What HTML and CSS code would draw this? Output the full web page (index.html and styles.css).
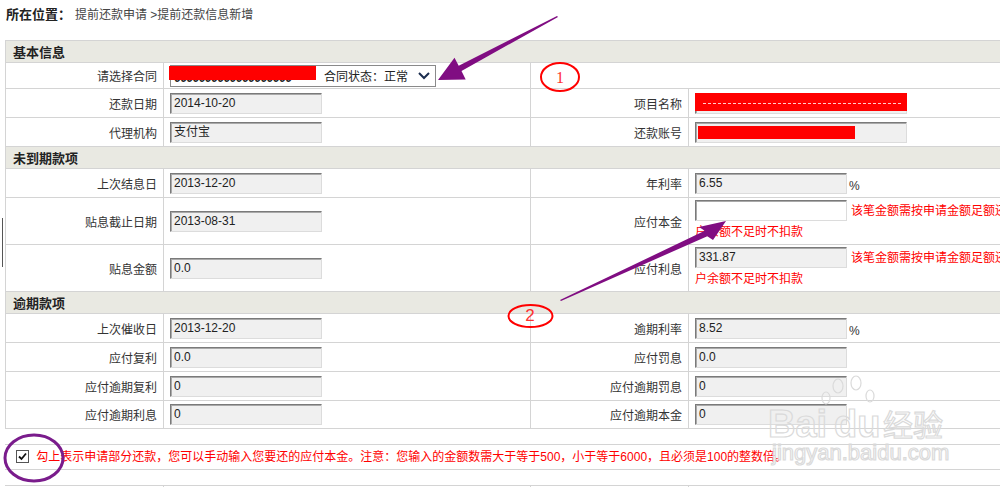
FILE: index.html
```html
<!DOCTYPE html>
<html lang="zh-CN">
<head>
    <meta charset="UTF-8">
    <title>提前还款信息新增</title>
    <link rel="stylesheet" href="styles.css">
</head>
<body>
    <div class="crumb"><b>所在位置：</b><span class="path">提前还款申请 &gt;提前还款信息新增</span></div>

    <div class="wrap">
        <table class="form">
            <colgroup><col class="c1"><col class="c2"><col class="c3"><col class="c4"></colgroup>
            <tr class="head"><td colspan="4">基本信息</td></tr>
            <tr class="h26">
                <td class="lbl">请选择合同</td>
                <td>
                    <div class="select">
                        <span class="num">0000000000000000000</span>
                        <span class="state">合同状态：正常</span>
                        <svg class="chev" width="14" height="10" viewBox="0 0 14 10"><path d="M2 2 L7 7 L12 2" fill="none" stroke="#1b2d4f" stroke-width="2"/></svg>
                        <span class="redact r-select"></span>
                    </div>
                </td>
                <td colspan="2"></td>
            </tr>
            <tr class="h29">
                <td class="lbl">还款日期</td>
                <td><span class="field">2014-10-20</span></td>
                <td class="lbl">项目名称</td>
                <td><span class="field wide"><span class="redact r-name"></span></span></td>
            </tr>
            <tr class="h29">
                <td class="lbl">代理机构</td>
                <td><span class="field">支付宝</span></td>
                <td class="lbl">还款账号</td>
                <td><span class="field wide">0<span class="redact r-acct"></span></span></td>
            </tr>

            <tr class="head"><td colspan="4">未到期款项</td></tr>
            <tr class="h29">
                <td class="lbl">上次结息日</td>
                <td><span class="field">2013-12-20</span></td>
                <td class="lbl">年利率</td>
                <td><span class="field">6.55</span><span class="pct">%</span></td>
            </tr>
            <tr class="h47">
                <td class="lbl">贴息截止日期</td>
                <td><span class="field">2013-08-31</span></td>
                <td class="lbl">应付本金</td>
                <td class="multi"><span class="field edit"></span><span class="warn">该笔金额需按申请金额足额还款，账户余额不足时不扣款</span></td>
            </tr>
            <tr class="h47">
                <td class="lbl">贴息金额</td>
                <td><span class="field">0.0</span></td>
                <td class="lbl">应付利息</td>
                <td class="multi"><span class="field">331.87</span><span class="warn">该笔金额需按申请金额足额还款，账户余额不足时不扣款</span></td>
            </tr>

            <tr class="head"><td colspan="4">逾期款项</td></tr>
            <tr class="h29">
                <td class="lbl">上次催收日</td>
                <td><span class="field">2013-12-20</span></td>
                <td class="lbl">逾期利率</td>
                <td><span class="field">8.52</span><span class="pct">%</span></td>
            </tr>
            <tr class="h29">
                <td class="lbl">应付复利</td>
                <td><span class="field">0.0</span></td>
                <td class="lbl">应付罚息</td>
                <td><span class="field">0.0</span></td>
            </tr>
            <tr class="h29">
                <td class="lbl">应付逾期复利</td>
                <td><span class="field">0</span></td>
                <td class="lbl">应付逾期罚息</td>
                <td><span class="field">0</span></td>
            </tr>
            <tr class="h28">
                <td class="lbl">应付逾期利息</td>
                <td><span class="field">0</span></td>
                <td class="lbl">应付逾期本金</td>
                <td><span class="field">0</span></td>
            </tr>
        </table>

        <div class="note">
            <span class="check"><svg width="11" height="11" viewBox="0 0 11 11"><path d="M2 5.5 L4.5 8 L9 2.5" fill="none" stroke="#111" stroke-width="1.8"/></svg></span>
            勾上表示申请部分还款，您可以手动输入您要还的应付本金。注意：您输入的金额数需大于等于500，小于等于6000，且必须是100的整数倍。
        </div>

        <table class="form tail">
            <colgroup><col class="c1"><col class="c2"><col class="c3"><col class="c4"></colgroup>
            <tr class="h29"><td></td><td></td><td></td><td></td></tr>
        </table>
    </div>

    <svg class="marks" width="1000" height="487" viewBox="0 0 1000 487">
        <line x1="2.5" y1="218" x2="2.5" y2="267" stroke="#555" stroke-width="1"/>

        <g class="wm" fill="none" stroke="#dadada" stroke-width="1.2">
            <text x="768" y="437" font-size="38" font-family="Liberation Sans, sans-serif" font-weight="bold">Bai</text>
            <text x="834" y="437" font-size="38" font-family="Liberation Sans, sans-serif" font-weight="bold">du</text>
            <text x="883" y="436" font-size="30" font-family="Noto Sans CJK SC, sans-serif">经验</text>
            <text x="772" y="460" font-size="22" font-family="Liberation Sans, sans-serif">jingyan.baidu.com</text>
            <ellipse cx="838" cy="386" rx="5" ry="7"/>
            <ellipse cx="856" cy="383" rx="5" ry="7"/>
            <ellipse cx="826" cy="398" rx="4" ry="6"/>
            <ellipse cx="870" cy="396" rx="4" ry="6"/>
        </g>

        <polygon points="558,17 461.5,71 465.7,79.5 438,80 454.5,57.8 458.7,65.8 557,16" fill="#800d82"/>
        <polygon points="561,301 707.3,236.2 713,240 726,221 699,227 704.7,230.8 560,300" fill="#800d82"/>

        <ellipse cx="560" cy="77" rx="19" ry="14" fill="none" stroke="#f00" stroke-width="2"/>
        <text x="560" y="83" text-anchor="middle" font-size="16" fill="#ff3030" font-family="Liberation Serif, serif">1</text>
        <ellipse cx="530.5" cy="316" rx="22" ry="11" fill="none" stroke="#f00" stroke-width="2"/>
        <text x="530" y="321" text-anchor="middle" font-size="17" fill="#ff3030" font-family="Liberation Sans, sans-serif">2</text>

        <ellipse cx="34" cy="458" rx="29" ry="23" fill="none" stroke="#7a1c8c" stroke-width="3"/>
    </svg>
</body>
</html>
```

FILE: styles.css
```css
body {
    margin: 0;
    height: 487px;
    overflow: hidden;
    position: relative;
    font-family: "Liberation Sans", "Noto Sans CJK SC", sans-serif;
    font-size: 12px;
    color: #333;
    background: #fff;
}

.crumb {
    height: 30px;
    line-height: 30px;
    padding-left: 6px;
    margin-bottom: 10px;
    color: #444;
}

.crumb b {
    font-size: 13px;
    color: #222;
}

.crumb .path {
    margin-left: 4px;
}

.wrap {
    padding-left: 5px;
    width: 1100px;
}

.form {
    border-collapse: collapse;
    table-layout: fixed;
    width: 1048px;
}

.form .c1 { width: 158px; }
.form .c2 { width: 367px; }
.form .c3 { width: 158px; }
.form .c4 { width: 365px; }

.form td {
    border: 1px solid #d4d4d4;
    padding: 0 6px;
    vertical-align: middle;
}

.form .head td {
    height: 21px;
    padding: 0 7px;
    background: #e9e9e2;
    font-size: 13px;
    font-weight: bold;
    color: #222;
}

.h26 td { height: 25px; }
.h28 td { height: 27px; }
.h29 td { height: 28px; }
.h47 td { height: 46px; }

.form td.lbl {
    text-align: right;
    color: #333;
}

.field {
    display: inline-block;
    position: relative;
    vertical-align: middle;
    box-sizing: border-box;
    width: 152px;
    height: 21px;
    line-height: 18px;
    padding-left: 3px;
    border: 1px solid;
    border-color: #7a7a7a #dcdcdc #dcdcdc #7a7a7a;
    box-shadow: inset 1px 1px 0 #a9a9a9;
    background: #f0f0f0;
    color: #222;
    white-space: nowrap;
}

.field.wide {
    width: 212px;
}

.field.edit {
    background: #fff;
}

.pct {
    display: inline-block;
    vertical-align: middle;
    margin: 5px 0 0 2px;
}

.multi {
    line-height: 20px;
    padding-top: 2px;
}

.warn {
    margin-left: 4px;
    color: #f00;
    vertical-align: middle;
}

.select {
    position: relative;
    display: flex;
    align-items: center;
    box-sizing: border-box;
    width: 266px;
    height: 22px;
    border: 1px solid #8a8a8a;
    background: #fff;
    color: #222;
}

.select .num {
    width: 146px;
    padding-left: 3px;
    padding-top: 4px;
    font-weight: bold;
    letter-spacing: -0.5px;
    overflow: hidden;
}

.select .state {
    margin-left: 4px;
}

.select .chev {
    margin-left: auto;
    margin-right: 4px;
}

.redact {
    position: absolute;
    background: #ff0000;
}

.r-select {
    left: -2px;
    top: 0;
    width: 147px;
    height: 14px;
}

.r-name {
    left: -1px;
    top: -1px;
    width: 212px;
    height: 18px;
}

.r-name::after {
    content: "";
    position: absolute;
    left: 8px;
    right: 6px;
    top: 10px;
    border-top: 1px dashed rgba(255, 255, 255, 0.8);
}

.r-acct {
    left: 2px;
    top: 3px;
    width: 157px;
    height: 13px;
}

.note {
    margin-top: 15px;
    width: 1048px;
    height: 24px;
    line-height: 24px;
    border-top: 1px solid #d4d4d4;
    border-bottom: 1px solid #d4d4d4;
    color: #f00;
    white-space: nowrap;
}

.check {
    display: inline-block;
    vertical-align: middle;
    box-sizing: border-box;
    width: 13px;
    height: 13px;
    margin: -3px 4px 0 11px;
    border: 1px solid #555;
    background: #fff;
    line-height: 0;
}

.tail {
    margin-top: 15px;
}

.tail td {
    border-bottom: none;
    border-left: none;
}

.marks {
    position: absolute;
    left: 0;
    top: 0;
    pointer-events: none;
}
```
